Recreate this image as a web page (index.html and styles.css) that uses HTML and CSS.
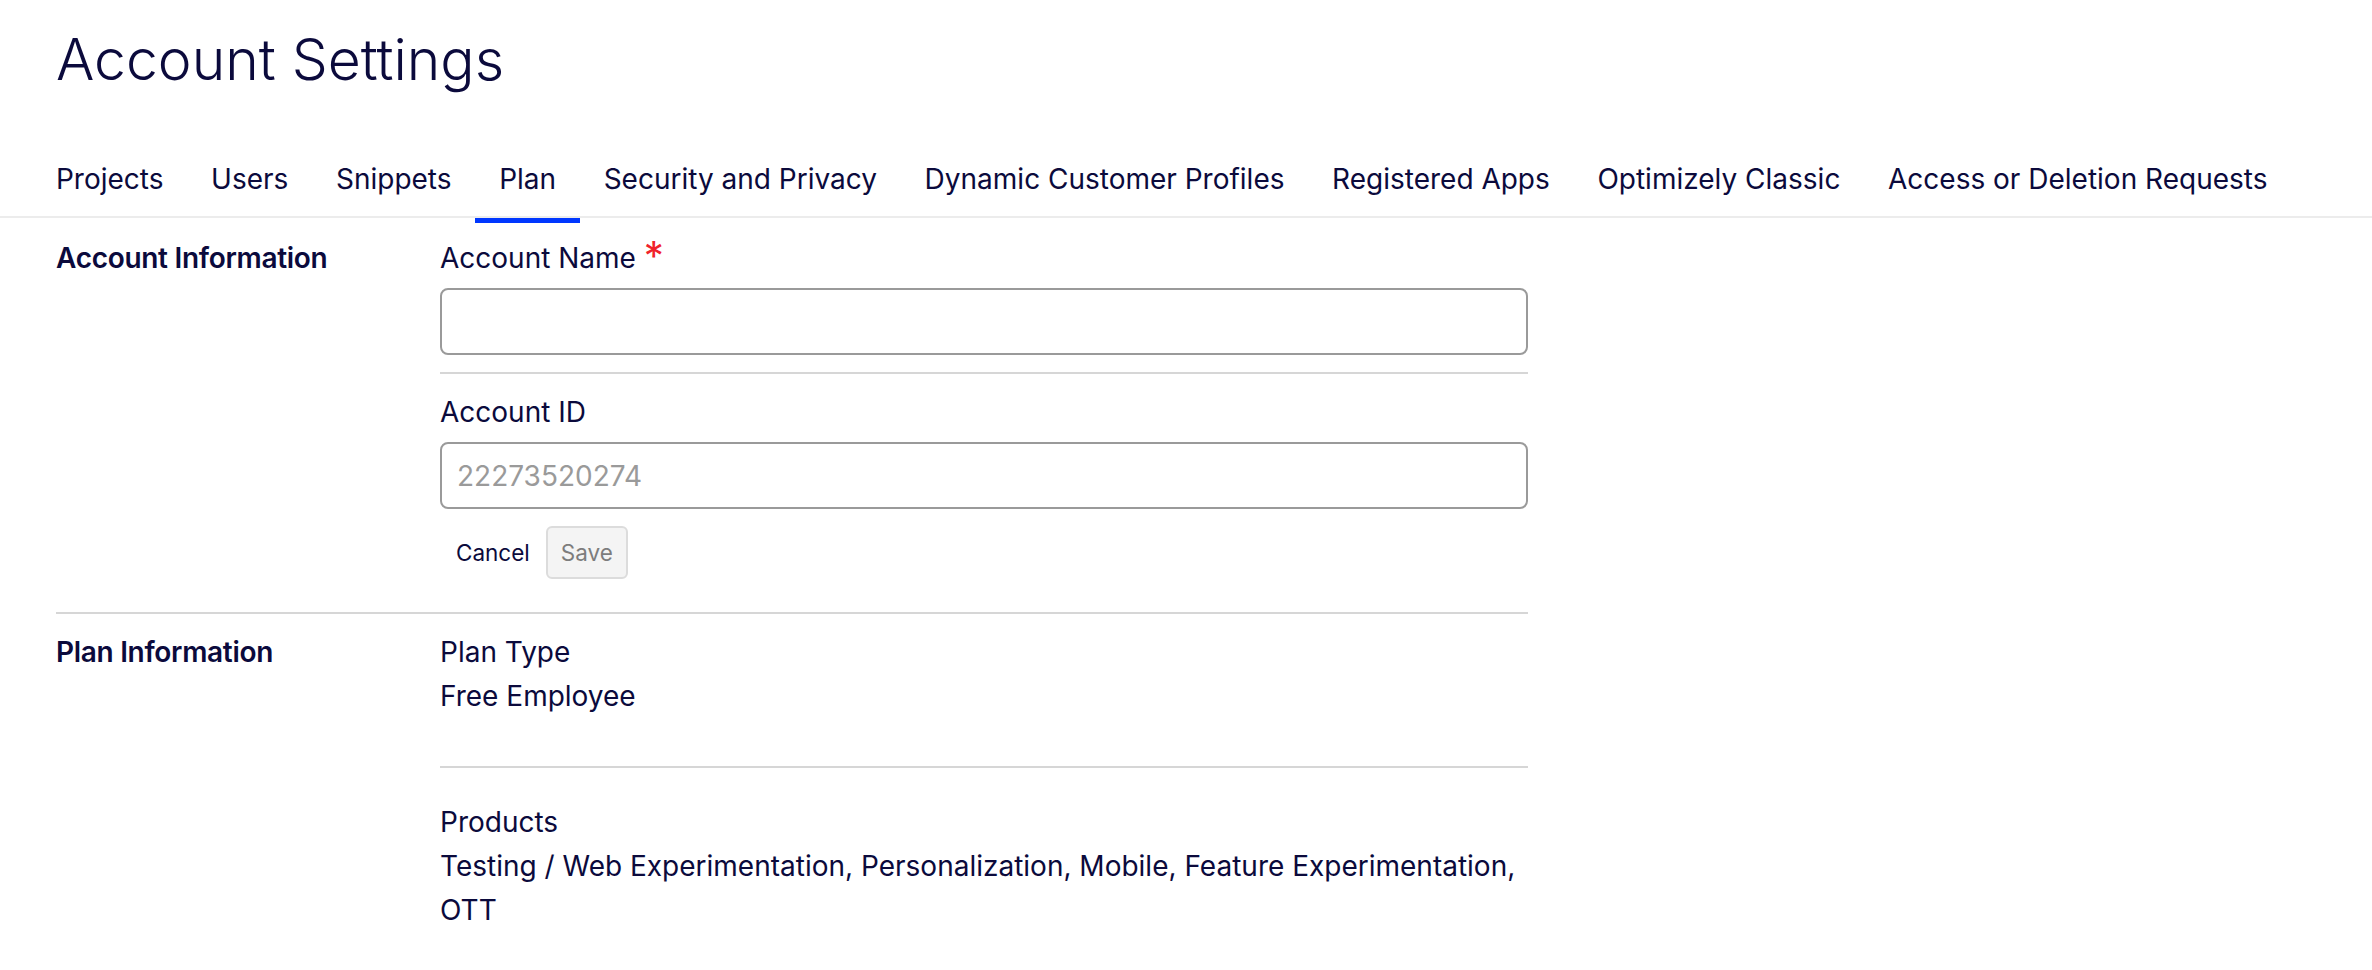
FILE: index.html
```html
<!DOCTYPE html>
<html lang="en">
<head>
<meta charset="utf-8">
<title>Account Settings</title>
<link rel="stylesheet" href="styles.css">
</head>
<body>
<header class="page-header">
  <h1 class="page-title">Account Settings</h1>
</header>
<nav class="tabs">
  <a class="tab">Projects</a>
  <a class="tab">Users</a>
  <a class="tab">Snippets</a>
  <a class="tab is-active">Plan</a>
  <a class="tab">Security and Privacy</a>
  <a class="tab">Dynamic Customer Profiles</a>
  <a class="tab">Registered Apps</a>
  <a class="tab">Optimizely Classic</a>
  <a class="tab">Access or Deletion Requests</a>
</nav>
<main class="content">
  <section class="section section-account">
    <h2 class="section-title">Account Information</h2>
    <div class="section-body">
      <div class="field field-divided">
        <label class="field-label">Account Name <span class="required">*</span></label>
        <input class="text-input" type="text">
      </div>
      <div class="field">
        <label class="field-label">Account ID</label>
        <input class="text-input" type="text" placeholder="22273520274">
      </div>
      <div class="actions">
        <button class="btn btn-plain">Cancel</button>
        <button class="btn btn-disabled">Save</button>
      </div>
    </div>
  </section>
  <section class="section section-plan">
    <h2 class="section-title">Plan Information</h2>
    <div class="section-body">
      <div class="info info-divided">
        <div class="info-label">Plan Type</div>
        <div class="info-value">Free Employee</div>
      </div>
      <div class="info info-products">
        <div class="info-label">Products</div>
        <div class="info-value">Testing / Web Experimentation, Personalization, Mobile, Feature Experimentation, OTT</div>
      </div>
    </div>
  </section>
</main>
</body>
</html>
```

FILE: styles.css
```css
* { box-sizing: border-box; }

html, body {
  margin: 0;
  padding: 0;
  background: #ffffff;
}

body {
  font-family: Inter, "Noto Sans", "Liberation Sans", sans-serif;
  color: #0b0a3c;
  font-size: 28px;
  line-height: 44px;
}

.page-header {
  padding: 26px 56px 0;
}

.page-title {
  margin: 0;
  font-size: 57px;
  font-weight: 300;
  line-height: 67px;
  letter-spacing: 0;
}

.tabs {
  display: flex;
  margin-top: 64px;
  padding: 0 0 0 32.2px;
  border-bottom: 2px solid #ececec;
  height: 61px;
}

.tab {
  display: block;
  padding: 0 23.8px;
  height: 66px;
  margin-bottom: -5px;
  border-bottom: 5px solid transparent;
  font-size: 28px;
  line-height: 44px;
  color: #0b0a3c;
  white-space: nowrap;
}

.tab.is-active {
  border-bottom-color: #0037ff;
}

.content {
  padding: 0 56px;
  width: 1584px;
}

.section {
  display: grid;
  grid-template-columns: 384px 1088px;
}

.section-account {
  padding-top: 18px;
  padding-bottom: 33px;
  border-bottom: 2px solid #d6d6d6;
}

.section-plan {
  padding-top: 16px;
}

.section-title {
  margin: 0;
  font-size: 28px;
  font-weight: 600;
  line-height: 44px;
  letter-spacing: -0.3px;
}

.field-label {
  display: block;
  margin-bottom: 8px;
}

.required {
  color: #f0232a;
  font-size: 40px;
  line-height: 30px;
  vertical-align: top;
  margin-left: 0;
  position: relative;
  top: 5px;
}

.text-input {
  display: block;
  width: 100%;
  height: 67px;
  padding: 0 15px;
  border: 2px solid #9a9a9a;
  border-radius: 8px;
  font-family: inherit;
  font-size: 28px;
  color: #0b0a3c;
  background: #fff;
  outline: none;
}

.text-input::placeholder {
  color: #9a9a9a;
}

.field-divided {
  padding-bottom: 17px;
  margin-bottom: 16px;
  border-bottom: 2px solid #d6d6d6;
}

.actions {
  display: flex;
  margin-top: 17px;
}

.btn {
  font-family: inherit;
  font-size: 22.5px;
  height: 53px;
  line-height: 49px;
  border-radius: 6px;
  background: transparent;
  border: 2px solid transparent;
  color: #0b0a3c;
  padding: 0 15px;
}

.btn-plain {
  padding: 0 14px;
}

.btn-disabled {
  background: #f4f4f4;
  border-color: #dcdcdc;
  color: #7d7d7d;
  padding: 0 13px;
}

.info-label,
.info-value {
  line-height: 44px;
}

.info-divided {
  padding-bottom: 48px;
  border-bottom: 2px solid #d6d6d6;
}

.info-products {
  padding-top: 31.5px;
}
```
